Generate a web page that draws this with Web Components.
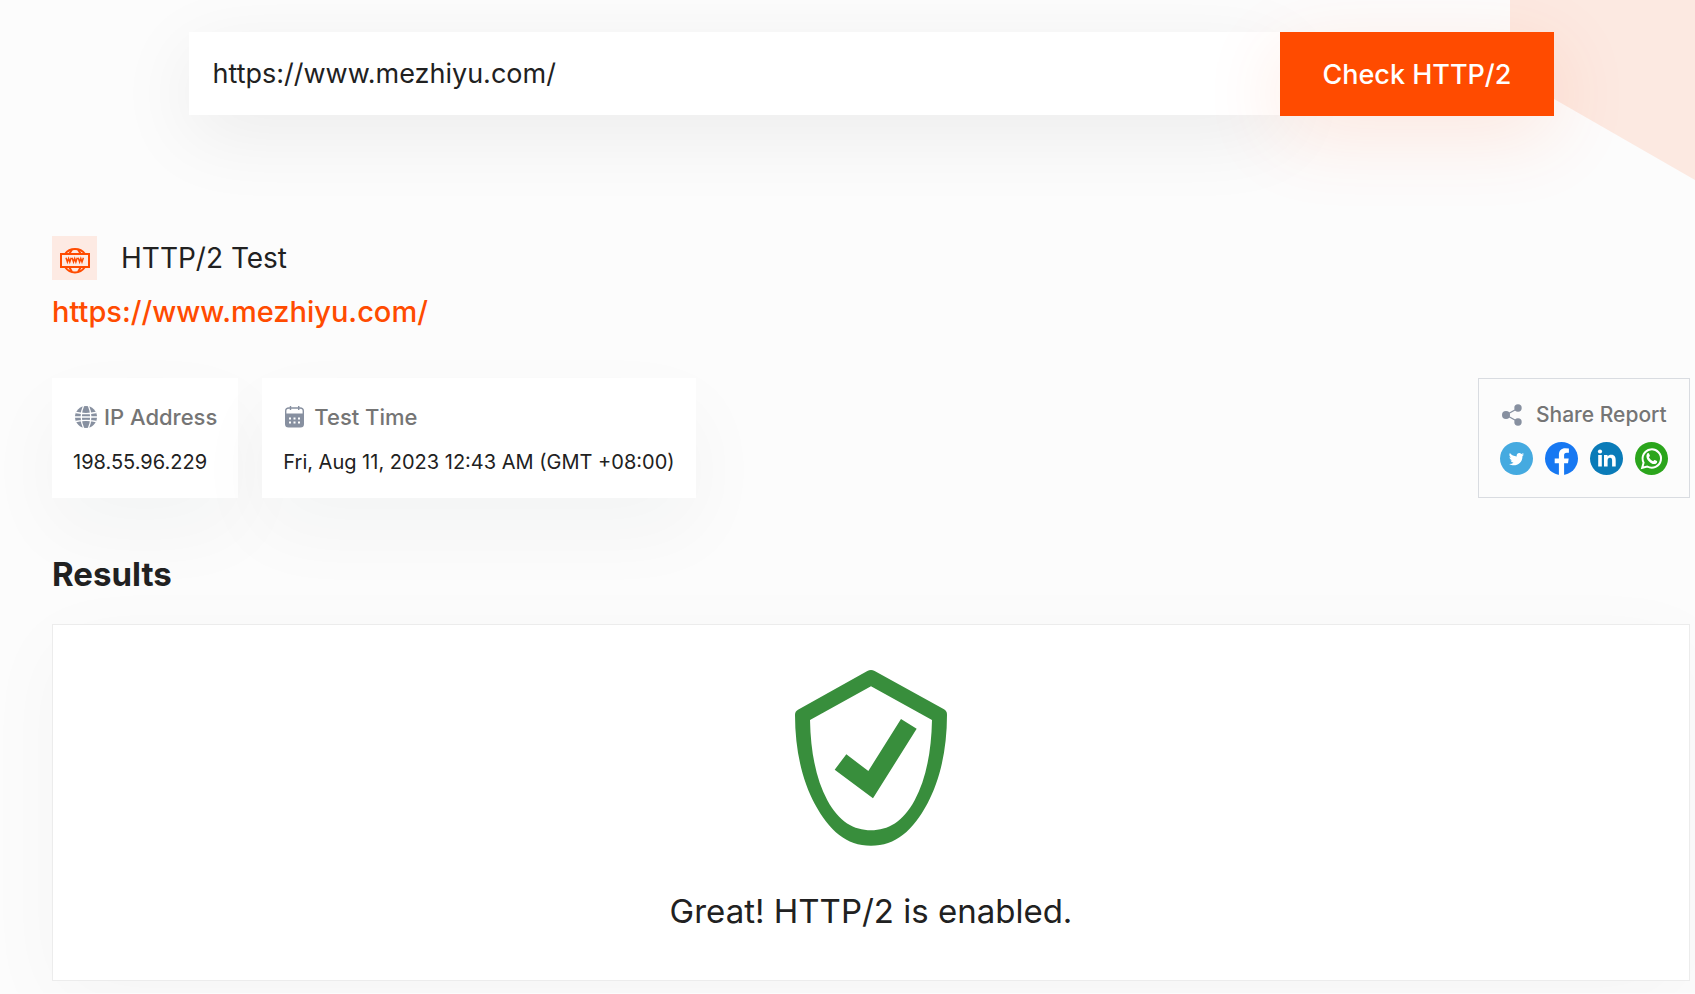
<!DOCTYPE html>
<html lang="en">
<head>
<meta charset="utf-8">
<meta name="viewport" content="width=device-width, initial-scale=1">
<title>HTTP/2 Test</title>
<style>
    body{
        margin: 0;
        min-height: 100vh;
        background: #fcfcfc;
        color: #212121;
        font-family: Inter, "Liberation Sans", sans-serif;
        --accent: #ff4b00;
        --muted: #757575;
        --icon: #8790a0;
    }
</style>
</head>
<body>
<test-page>
    <check-form slot="form" value="https://www.mezhiyu.com/">Check HTTP/2</check-form>
    <report-title slot="title" href="https://www.mezhiyu.com/">HTTP/2 Test</report-title>
    <info-card slot="info" icon="globe" label="IP Address">198.55.96.229</info-card>
    <info-card slot="info" icon="calendar" label="Test Time">Fri, Aug 11, 2023 12:43 AM (GMT +08:00)</info-card>
    <share-box slot="share">Share Report</share-box>
    <result-panel slot="result" heading="Results">Great! HTTP/2 is enabled.</result-panel>
</test-page>

<script>
const icons = {
    www: `<svg viewBox="0 0 30 26" fill="none" stroke="currentColor" stroke-width="2">
        <path d="M5 6C7.500 2.500 11 1 15 1S22.500 2.500 25 6M5 19C7.500 22.500 11 24.500 15 24.500S22.500 22.500 25 19"/>
        <path d="M9.500 5.500L12 1.500M20.500 5.500L18 1.500M9.500 19.500L12 24M20.500 19.500L18 24"/>
        <path d="M1 6H29V19H1Z"/>
        <path stroke-width="1.500" d="M6 9.800L7.400 14L8.600 10.500L9.800 14L11.200 9.800M12.100 9.800L13.500 14L14.700 10.500L15.900 14L17.300 9.800M18.200 9.800L19.600 14L20.800 10.500L22 14L23.400 9.800"/></svg>`,
    globe: `<svg viewBox="0 0 24 24" fill="none">
        <circle cx="13" cy="12" r="11" fill="currentColor"/>
        <path stroke="#fff" stroke-width="1.300" d="M10.500 1C7.500 7 7.500 17 10.500 23M15.500 1C18.500 7 18.500 17 15.500 23M2 12H24M3 7.500C9 8.800 17 8.800 23 7.500M3 16.500C9 15.200 17 15.200 23 16.500"/></svg>`,
    calendar: `<svg viewBox="0 0 24 24" fill="none">
        <path stroke="currentColor" stroke-width="1.400" d="M2.700 9V6Q2.700 3 6 3H17Q20.300 3 20.300 6V9M7.500 1V5M15.700 1V5"/>
        <path fill="currentColor" d="M2 8.500H21V19Q21 22.500 17.500 22.500H5.500Q2 22.500 2 19Z"/>
        <path fill="#fff" d="M6 12.500H8V14.500H6ZM10.500 12.500H12.500V14.500H10.500ZM15 12.500H17V14.500H15ZM6 16.500H8V18.500H6ZM10.500 16.500H12.500V18.500H10.500ZM15 16.500H17V18.500H15Z"/></svg>`,
    share: `<svg viewBox="0 0 24 24" fill="currentColor">
        <path fill="none" stroke="currentColor" stroke-width="1.300" d="M18.500 5L6 12L18.500 19"/>
        <circle cx="6" cy="12" r="4"/><circle cx="18" cy="5" r="3.700"/><circle cx="18" cy="19" r="3.700"/></svg>`,
    twitter: `<svg viewBox="0 0 33 33"><circle cx="16.500" cy="16.500" r="16.500" fill="#45aae0"/>
        <path fill="#fff" d="M24 12.200Q23 12.700 22.200 12.800Q23.300 12.100 23.600 11.100Q22.500 11.700 21.500 11.900C19.200 9.700 16 11.500 16.700 14.500Q12.500 14.300 9.900 11.100Q8.500 13.800 10.900 15.600Q10 15.500 9.400 15.200Q9.600 17.700 12 18.400Q11.200 18.600 10.500 18.500Q11.200 20.500 13.500 20.700Q11.500 22.200 9 22C14 25 22.500 23 22.500 14Q23.500 13.200 24 12.200Z"/></svg>`,
    facebook: `<svg viewBox="0 0 33 33"><circle cx="16.500" cy="16.500" r="16.500" fill="#1778f2"/>
        <path fill="#fff" d="M13.900 33V21.200H9.700V16.500H13.900V12.800C13.900 8.500 16.400 6.300 20.200 6.300Q22.200 6.300 23.900 6.600V10.700H21.800C19.700 10.700 19.100 11.900 19.100 13.300V16.500H23.700L23 21.200H19.100V33Z"/></svg>`,
    linkedin: `<svg viewBox="0 0 33 33"><circle cx="16.500" cy="16.500" r="16.500" fill="#0a7bb8"/>
        <circle cx="10" cy="9.500" r="2.100" fill="#fff"/>
        <path fill="#fff" d="M8.200 13H11.800V24.500H8.200ZM14 13H17.500V14.600C18.300 13.300 19.600 12.700 21.200 12.700C25 12.700 25.700 15.200 25.700 18.300V24.500H22.100V19C22.100 17.500 22 15.800 20 15.800S17.600 17.300 17.600 18.900V24.500H14Z"/></svg>`,
    whatsapp: `<svg viewBox="0 0 33 33"><circle cx="16.500" cy="16.500" r="16.500" fill="#2ba51c"/>
        <path fill="none" stroke="#fff" stroke-width="2" d="M7.200 25.800L8.600 20.700A9.200 9.200 0 1 1 12.200 24.500Z"/>
        <path fill="#fff" d="M12.300 11.500C13 10.900 13.800 11 14.100 11.700L14.900 13.600Q15.100 14.200 13.900 15.300C15 17.300 16.300 18.400 18.200 19.200Q19.200 17.900 19.800 18L22 19.100Q22.400 19.500 21.900 20.700C20.800 22.500 18.500 22.500 15.800 20.900C12.600 18.900 10 14.700 12.300 11.500Z"/></svg>`,
    shield: `<svg viewBox="48 44 456 528" fill="currentColor">
        <path fill-rule="evenodd" d="M265 47Q276 41 287 47L495 162Q504 167 504 178C504 290 480 380 445 445C402 525 350 571 276 571C202 571 150 525 107 445C72 380 48 290 48 178Q48 168 57 163ZM276 93L93 194C95 295 113 375 145 435C180 500 225 525 276 525C327 525 372 500 407 435C439 375 457 295 459 194Z"/>
        <path d="M202 297L268 347L366 191L413 220L282 429L167 343Z"/></svg>`
}

class UiIcon extends HTMLElement{
    constructor(){
        super()
        this.attachShadow({mode: "open"})
    }
    connectedCallback(){
        this.setAttribute('aria-hidden', 'true')
        this.shadowRoot.innerHTML = `
            <style>
                :host{ display: block; flex: none; }
                svg{ display: block; width: 100%; height: 100%; }
            </style>
            ${icons[this.getAttribute('name')]}
        `
    }
}
customElements.define('ui-icon', UiIcon)

class CheckForm extends HTMLElement{
    constructor(){
        super()
        this.attachShadow({mode: "open"})
        this.shadowRoot.innerHTML = `
            <style>
                :host{ display: block; }
                form{
                    display: flex;
                    align-items: flex-start;
                    margin: 0;
                }
                input, button{
                    box-sizing: border-box;
                    border: 0;
                    border-radius: 0;
                    font-family: inherit;
                    font-size: 27px;
                }
                input{
                    flex: 1;
                    min-width: 0;
                    height: 83px;
                    padding: 0 24px;
                    background: #fff;
                    color: inherit;
                    box-shadow: 0 20px 80px rgba(0, 0, 0, .07);
                    outline: 0;
                }
                button{
                    height: 84px;
                    padding: 0 42px;
                    background: var(--accent);
                    color: #fff;
                    font-weight: 500;
                    white-space: nowrap;
                    cursor: pointer;
                    box-shadow: 0 20px 80px rgba(255, 75, 0, .12);
                }
            </style>
            <form>
                <input type="url" aria-label="Website URL">
                <button type="submit"><slot></slot></button>
            </form>
        `
        this.shadowRoot.querySelector('form').addEventListener('submit', e => e.preventDefault())
    }
    connectedCallback(){
        this.shadowRoot.querySelector('input').value = this.getAttribute('value')
    }
}
customElements.define('check-form', CheckForm)

class ReportTitle extends HTMLElement{
    constructor(){
        super()
        this.attachShadow({mode: "open"})
        this.shadowRoot.innerHTML = `
            <style>
                :host{ display: block; }
                header{
                    display: flex;
                    align-items: center;
                    gap: 24px;
                }
                .badge{
                    padding: 12px 7px 6px 8px;
                    background: #fdeae3;
                    color: var(--accent);
                }
                ui-icon{ width: 30px; height: 26px; }
                h1{
                    margin: 0;
                    font-size: 28px;
                    font-weight: 400;
                    line-height: 44px;
                }
                a{
                    display: inline-block;
                    margin-top: 8px;
                    color: var(--accent);
                    font-size: 29px;
                    font-weight: 500;
                    line-height: 48px;
                    text-decoration: none;
                }
            </style>
            <header>
                <div class="badge"><ui-icon name="www"></ui-icon></div>
                <h1><slot></slot></h1>
            </header>
            <a></a>
        `
    }
    connectedCallback(){
        const link = this.shadowRoot.querySelector('a')
        link.href = this.getAttribute('href')
        link.textContent = this.getAttribute('href')
    }
}
customElements.define('report-title', ReportTitle)

class InfoCard extends HTMLElement{
    constructor(){
        super()
        this.attachShadow({mode: "open"})
    }
    connectedCallback(){
        this.shadowRoot.innerHTML = `
            <style>
                :host{
                    display: block;
                    padding: 22px 21px 19px;
                    background: #fff;
                    box-shadow: 0 32px 80px rgba(0, 40, 40, .04);
                    line-height: 34px;
                    white-space: nowrap;
                }
                .label{
                    display: flex;
                    align-items: center;
                    gap: 7px;
                    margin-bottom: 11px;
                    color: var(--muted);
                    font-size: 22px;
                    font-weight: 500;
                }
                ui-icon{ width: 24px; height: 24px; color: var(--icon); }
                .value{ font-size: 20px; }
            </style>
            <div class="label"><ui-icon name="${this.getAttribute('icon')}"></ui-icon>${this.getAttribute('label')}</div>
            <div class="value"><slot></slot></div>
        `
    }
}
customElements.define('info-card', InfoCard)

class ShareBox extends HTMLElement{
    constructor(){
        super()
        this.attachShadow({mode: "open"})
        this.shadowRoot.innerHTML = `
            <style>
                :host{
                    display: block;
                    padding: 19px 21px 22px;
                    border: 1px solid #d9dce1;
                }
                .label{
                    display: flex;
                    align-items: center;
                    gap: 12px;
                    margin-bottom: 10px;
                    color: var(--muted);
                    font-size: 21px;
                    font-weight: 500;
                    line-height: 34px;
                    white-space: nowrap;
                }
                .label ui-icon{ width: 24px; height: 24px; color: var(--icon); }
                nav{ display: flex; gap: 12px; }
                nav ui-icon{ width: 33px; height: 33px; }
            </style>
            <div class="label"><ui-icon name="share"></ui-icon><slot></slot></div>
            <nav>
                <a href="#twitter" aria-label="Twitter"><ui-icon name="twitter"></ui-icon></a>
                <a href="#facebook" aria-label="Facebook"><ui-icon name="facebook"></ui-icon></a>
                <a href="#linkedin" aria-label="LinkedIn"><ui-icon name="linkedin"></ui-icon></a>
                <a href="#whatsapp" aria-label="WhatsApp"><ui-icon name="whatsapp"></ui-icon></a>
            </nav>
        `
    }
}
customElements.define('share-box', ShareBox)

class ResultPanel extends HTMLElement{
    constructor(){
        super()
        this.attachShadow({mode: "open"})
    }
    connectedCallback(){
        this.shadowRoot.innerHTML = `
            <style>
                :host{ display: block; }
                h2{
                    margin: 0 0 26px;
                    font-size: 33px;
                    font-weight: 700;
                    line-height: 48px;
                }
                .panel{
                    display: flex;
                    flex-direction: column;
                    align-items: center;
                    gap: 45px;
                    padding: 45px 24px 49px;
                    border: 1px solid #ececec;
                    background: #fff;
                    box-shadow: 0 20px 80px rgba(0, 0, 0, .03);
                }
                ui-icon{ width: 152px; height: 176px; color: #388e3c; }
                p{
                    margin: 0;
                    font-size: 33px;
                    line-height: 40px;
                }
            </style>
            <h2>${this.getAttribute('heading')}</h2>
            <div class="panel">
                <ui-icon name="shield"></ui-icon>
                <p><slot></slot></p>
            </div>
        `
    }
}
customElements.define('result-panel', ResultPanel)

class TestPage extends HTMLElement{
    constructor(){
        super()
        this.attachShadow({mode: "open"})
        this.shadowRoot.innerHTML = `
            <style>
                :host{
                    display: block;
                    position: relative;
                    overflow: hidden;
                }
                .corner{
                    position: absolute;
                    top: 0;
                    right: 0;
                    width: 185px;
                    height: 180px;
                    background: #fce9e1;
                    clip-path: polygon(0 0, 100% 0, 100% 100%, 0 41%);
                }
                main{
                    position: relative;
                    padding: 32px 5px 12px 52px;
                }
                .search{
                    display: grid;
                    grid-template-columns: 1fr 10fr 1fr;
                    margin-bottom: 120px;
                }
                .search slot{ display: block; grid-column: 2; }
                .summary{
                    display: flex;
                    flex-wrap: wrap;
                    justify-content: space-between;
                    gap: 24px;
                    margin: 42px 0 52px;
                }
                .cards{
                    display: flex;
                    flex-wrap: wrap;
                    gap: 24px;
                }
            </style>
            <div class="corner"></div>
            <main>
                <div class="search"><slot name="form"></slot></div>
                <slot name="title"></slot>
                <div class="summary">
                    <div class="cards"><slot name="info"></slot></div>
                    <slot name="share"></slot>
                </div>
                <slot name="result"></slot>
            </main>
        `
    }
}
customElements.define('test-page', TestPage)
</script>
</body>
</html>
